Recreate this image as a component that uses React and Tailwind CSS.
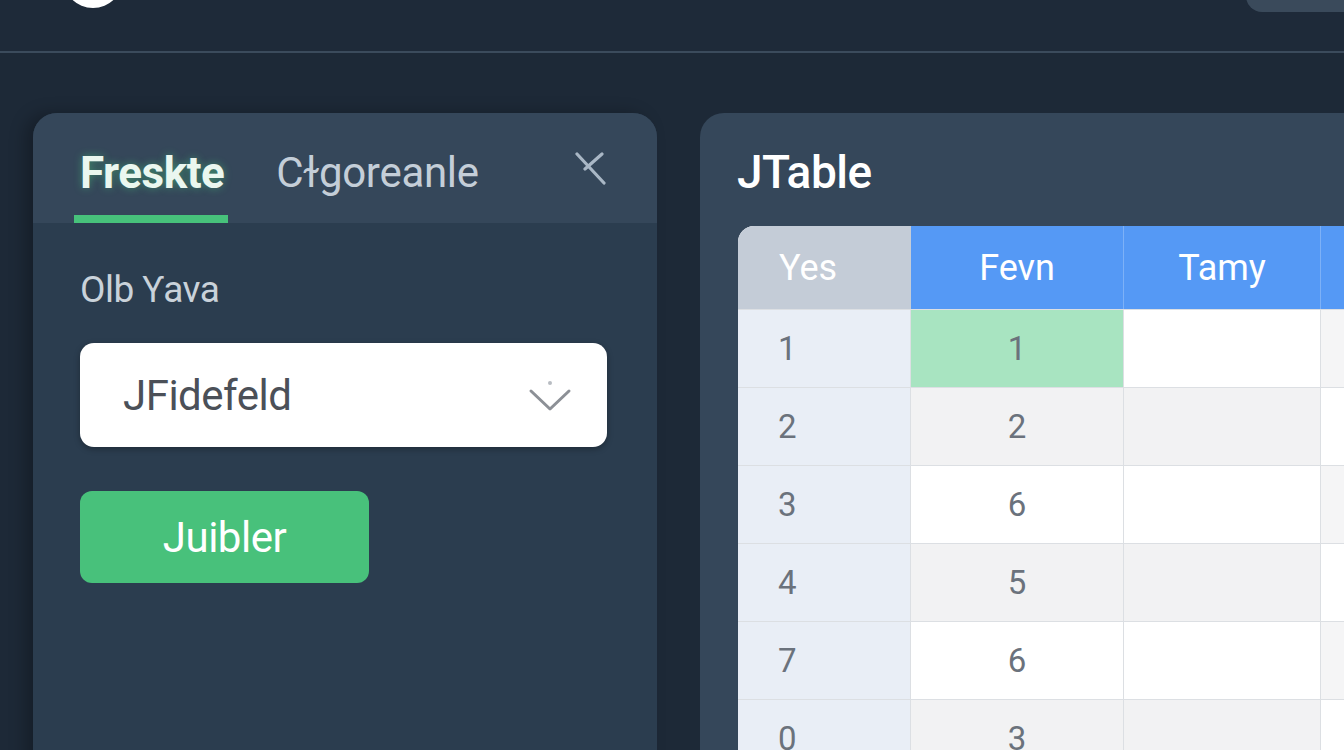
const rows = [
  { n: "1", v: "1" },
  { n: "2", v: "2" },
  { n: "3", v: "6" },
  { n: "4", v: "5" },
  { n: "7", v: "6" },
  { n: "0", v: "3" },
];

function CloseIcon() {
  return (
    <svg width="32" height="34" viewBox="0 0 32 34" fill="none">
      <path d="M2 2 L29 31" stroke="#a9b7c5" strokeWidth="3.2" strokeLinecap="round" />
      <path d="M27 2 L10 17" stroke="#a9b7c5" strokeWidth="3.2" strokeLinecap="round" />
    </svg>
  );
}

function Chevron() {
  return (
    <svg width="44" height="34" viewBox="0 0 44 34" fill="none">
      <circle cx="22" cy="4" r="2" fill="#b8bcc2" />
      <path d="M3 12 L22 30 L41 12" stroke="#8c9096" strokeWidth="3" strokeLinecap="round" strokeLinejoin="round" />
    </svg>
  );
}

function SidePanel() {
  return (
    <div className="w-[624px] shrink-0 rounded-t-[24px] bg-[#2b3d4f] overflow-hidden shadow-[-8px_0_16px_rgba(0,0,0,0.25)]">
      <div className="h-[110px] bg-[#35475a] flex items-end pl-[41px] pr-[50px]">
        <div className="flex flex-col">
          <span className="px-[6px] pb-[20px] text-[44px] leading-none font-bold text-[#eaf7ef] tracking-[-0.5px] [text-shadow:0_0_8px_rgba(74,222,128,0.45)]">
            Freskte
          </span>
          <div className="h-[8px] w-[154px] bg-[#47c27b]" />
        </div>
        <span className="ml-[46px] pb-[29px] text-[42px] leading-none text-[#c4ced8] tracking-[-0.3px]">
          Cɫgoreanle
        </span>
        <div className="ml-auto pb-[37px]">
          <CloseIcon />
        </div>
      </div>
      <div className="px-[47px] pt-[48px] pb-[200px] flex flex-col">
        <label className="text-[37px] leading-none text-[#c9d2da] tracking-[-0.5px]">Olb Ƴava</label>
        <div className="mt-[35px] w-[527px] h-[104px] rounded-[14px] bg-white flex items-center pl-[43px] pr-[35px] shadow-[0_2px_6px_rgba(0,0,0,0.3)]">
          <span className="text-[42px] text-[#4b5058] tracking-[-0.5px]">JFidefeld</span>
          <div className="ml-auto mt-[2px]">
            <Chevron />
          </div>
        </div>
        <button className="mt-[44px] w-[289px] h-[92px] rounded-[12px] bg-[#48c17b] text-[42px] text-white tracking-[-0.5px]">
          Juibler
        </button>
      </div>
    </div>
  );
}

function TablePanel() {
  return (
    <div className="w-[720px] shrink-0 rounded-t-[24px] bg-[#35475a] pl-[37px] pt-[33px]">
      <h1 className="text-[46px] leading-none font-medium text-white tracking-[-0.5px] pt-[3px] pb-[31px]">
        JTable
      </h1>
      <div className="ml-[1px] rounded-tl-[16px] overflow-hidden bg-white">
        <div className="flex h-[83px] text-[36px] text-white">
          <div className="w-[173px] bg-[#c4ccd7] flex items-center pl-[41px]">Yes</div>
          <div className="w-[213px] bg-[#5599f5] flex items-center justify-center border-r border-[#7db1f7]">Fevn</div>
          <div className="w-[197px] bg-[#5599f5] flex items-center justify-center border-r border-[#7db1f7]">Tamy</div>
          <div className="flex-1 bg-[#5599f5]" />
        </div>
        {rows.map((r, i) => {
          const grey = i % 2 === 1;
          return (
            <div key={i} className="flex h-[78px] text-[33px] text-[#6b727c] border-t border-[#dcdfe3]">
              <div className="w-[173px] bg-[#e9eef6] flex items-center pl-[40px] border-r border-[#dcdfe3]">{r.n}</div>
              <div
                className={
                  i === 0
                    ? "w-[213px] bg-[#a8e4c1] flex items-center justify-center border-r border-[#dcdfe3]"
                    : grey
                    ? "w-[213px] bg-[#f2f2f3] flex items-center justify-center border-r border-[#dcdfe3]"
                    : "w-[213px] bg-white flex items-center justify-center border-r border-[#dcdfe3]"
                }
              >
                {r.v}
              </div>
              <div className={grey ? "w-[197px] bg-[#f2f2f3] border-r border-[#dcdfe3]" : "w-[197px] bg-white border-r border-[#dcdfe3]"} />
              <div className={grey ? "flex-1 bg-white" : "flex-1 bg-[#f5f5f6]"} />
            </div>
          );
        })}
      </div>
    </div>
  );
}

export default function App() {
  return (
    <div className="w-[1344px] h-[750px] overflow-hidden bg-[#1d2937] font-['Roboto','Noto_Sans',sans-serif]">
      <div className="relative h-[53px] bg-[#1e2a39] border-b-2 border-[#3b4b5c]">
        <div className="absolute left-[63px] top-[-52px] w-[60px] h-[60px] rounded-full bg-white" />
        <div className="absolute right-0 top-[-20px] w-[98px] h-[32px] rounded-bl-[22px] rounded-tl-[22px] bg-[#3a4a5b]" />
      </div>
      <div className="flex gap-[43px] pl-[33px] pt-[60px]">
        <SidePanel />
        <TablePanel />
      </div>
    </div>
  );
}
